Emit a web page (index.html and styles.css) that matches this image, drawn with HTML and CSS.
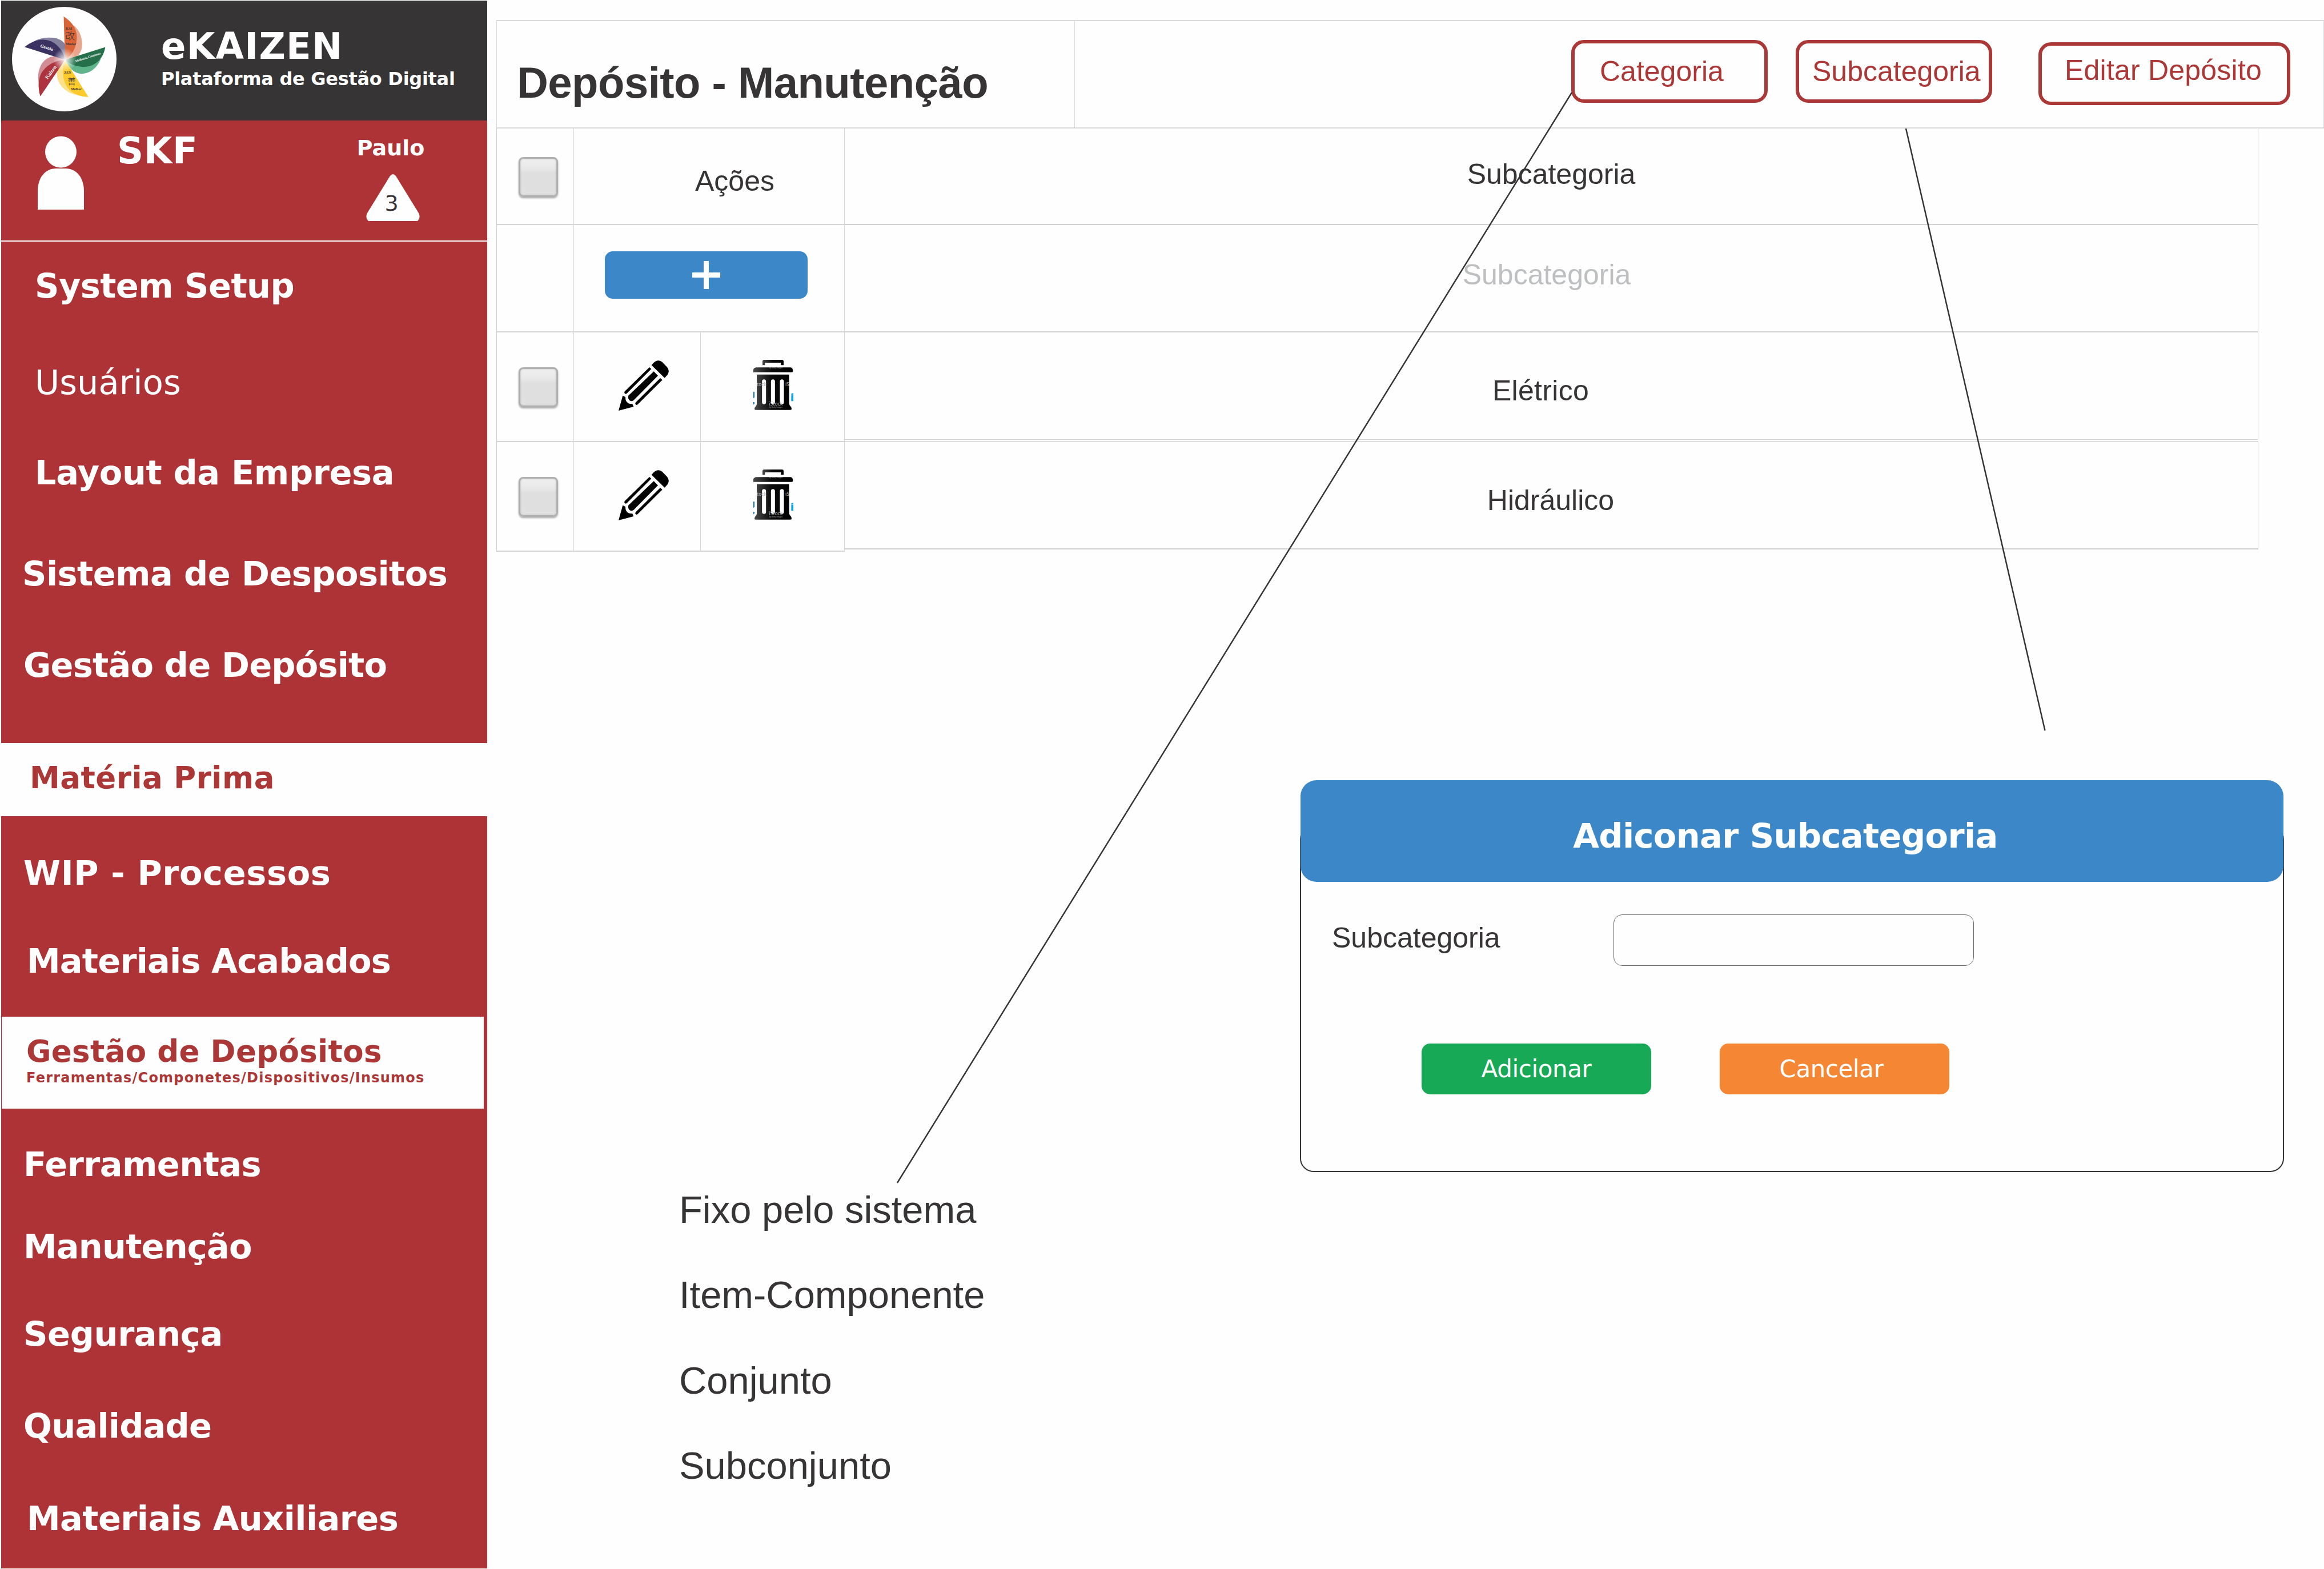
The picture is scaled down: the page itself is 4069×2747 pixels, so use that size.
FILE: index.html
```html
<!DOCTYPE html>
<html lang="pt-BR">
<head>
<meta charset="utf-8">
<title>eKAIZEN - Depósito</title>
<link rel="stylesheet" href="styles.css">
</head>
<body>
<aside class="sidebar">
  <div class="brand">
    <svg class="logo" viewBox="63 36 550 550">
      <defs>
        <radialGradient id="hub" gradientUnits="userSpaceOnUse" cx="341" cy="315" r="62">
          <stop offset="0" stop-color="#fff" stop-opacity=".95"/>
          <stop offset="1" stop-color="#fff" stop-opacity="0"/>
        </radialGradient>
      </defs>
      <circle cx="338" cy="311" r="275" fill="#fefefe"/>
      <path d="M385 132C425 160 440 220 428 262C418 295 385 312 342 315Z" fill="#e9a68c"/>
      <path d="M335 86C385 118 408 160 404 206C400 258 375 295 342 315Z" fill="#d96437"/>
      <path d="M342 315L530 310C510 360 470 388 425 388C390 386 365 360 342 315Z" fill="#5fb48b"/>
      <path d="M554 248C545 300 510 352 436 352C395 350 365 335 342 315Z" fill="#25704a"/>
      <path d="M342 315L300 372C292 425 330 490 410 500Z" fill="#fde08a"/>
      <path d="M342 315L465 510C400 508 350 480 334 410C328 370 332 340 342 315Z" fill="#fdca2b"/>
      <path d="M342 315C310 285 250 290 220 335C200 370 198 400 203 435Z" fill="#d18d93"/>
      <path d="M342 315C285 318 225 350 208 410C198 445 205 480 212 507Z" fill="#ad333f"/>
      <path d="M185 213C240 190 320 190 342 235L342 315Z" fill="#86809f"/>
      <path d="M129 247C180 208 225 200 270 218C310 238 335 275 342 315Z" fill="#3b3262"/>
      <circle cx="341" cy="315" r="62" fill="url(#hub)"/>
      <g class="logo-text">
        <text x="346" y="156" font-size="18">KAI</text>
        <text class="kanji" x="344" y="208" font-size="50">改</text>
        <text x="346" y="238" font-size="18">Mudar</text>
        <text x="337" y="389" font-size="18">ZEN</text>
        <text class="kanji" x="354" y="446" font-size="46">善</text>
        <text x="373" y="474" font-size="18">Melhor</text>
        <text class="light" transform="translate(398 328) rotate(-18)" font-size="17">Melhoria Contínua</text>
        <text class="light" transform="translate(210 248) rotate(17)" font-size="24">Gestão</text>
        <text class="light" transform="translate(250 418) rotate(-53)" font-size="27">Kaizen</text>
      </g>
    </svg>
    <div class="brand-text">
      <div class="brand-name">eKAIZEN</div>
      <div class="brand-sub">Plataforma de Gestão Digital</div>
    </div>
  </div>
  <div class="account">
    <svg class="person" viewBox="0 0 81 129">
      <circle cx="40.500" cy="28" r="27.500"/>
      <path d="M0 129V97C0 72 14 57 32 57H49C67 57 81 72 81 97V129Z"/>
    </svg>
    <div class="company">SKF</div>
    <div class="user">
      <div class="user-name">Paulo</div>
      <div class="alert">
        <svg class="alert-shape" viewBox="0 0 94 82"><path d="M42 3Q47 -3 52 3L92 68Q96 76 90 82H4Q-2 76 2 68Z"/></svg>
        <span class="alert-count">3</span>
      </div>
    </div>
  </div>
  <nav class="group group-setup">
    <a class="item in-3">System Setup</a>
    <a class="item in-3 regular">Usuários</a>
    <a class="item in-3 relaxed">Layout da Empresa</a>
    <a class="item in-0">Sistema de Despositos</a>
    <a class="item in-1 tight">Gestão de Depósito</a>
  </nav>
  <a class="section section-raw">Matéria Prima</a>
  <nav class="group group-stock">
    <a class="item in-1 loose">WIP - Processos</a>
    <a class="item in-2 tight">Materiais Acabados</a>
  </nav>
  <a class="section section-depots">Gestão de Depósitos
    <small class="section-note">Ferramentas/Componetes/Dispositivos/Insumos</small>
  </a>
  <nav class="group group-areas">
    <a class="item in-1">Ferramentas</a>
    <a class="item in-1 tight">Manutenção</a>
    <a class="item in-1 relaxed">Segurança</a>
    <a class="item in-1 tight">Qualidade</a>
    <a class="item in-2">Materiais Auxiliares</a>
  </nav>
</aside>
<main class="main">
  <header class="topbar">
    <h1 class="title">Depósito - Manutenção</h1>
    <button class="outline-btn btn-category">Categoria</button>
    <button class="outline-btn btn-subcategory">Subcategoria</button>
    <button class="outline-btn btn-edit">Editar Depósito</button>
  </header>
  <section class="table">
    <div class="actions">
      <div class="cell check-cell"><i class="checkbox"></i></div>
      <div class="cell wide actions-head">Ações</div>
      <div class="cell"></div>
      <div class="cell wide add-cell"><button class="add-btn"><svg class="plus" viewBox="0 0 49 49"><path d="M20 0h9v20h20v9h-20v20h-9v-20h-20v-9h20z"/></svg></button></div>
      <div class="cell check-cell low"><i class="checkbox"></i></div>
      <div class="cell pencil-cell"><svg class="icon" viewBox="39 48 264 264"><use href="#pencil"/></svg></div>
      <div class="cell trash-cell"><svg class="trash" viewBox="747 44 210 264"><use href="#trash"/></svg></div>
      <div class="cell check-cell low"><i class="checkbox"></i></div>
      <div class="cell pencil-cell"><svg class="icon" viewBox="39 48 264 264"><use href="#pencil"/></svg></div>
      <div class="cell trash-cell"><svg class="trash" viewBox="747 44 210 264"><use href="#trash"/></svg></div>
    </div>
    <div class="names">
      <div class="name name-head">Subcategoria</div>
      <div class="name name-new">Subcategoria</div>
      <div class="name name-electric">Elétrico</div>
      <div class="name name-hydraulic">Hidráulico</div>
    </div>
  </section>
  <section class="workspace">
    <div class="notes">
      <p>Fixo pelo sistema</p>
      <p>Item-Componente</p>
      <p>Conjunto</p>
      <p>Subconjunto</p>
    </div>
    <div class="dialog">
      <h2 class="dialog-title">Adiconar Subcategoria</h2>
      <div class="dialog-body">
        <div class="field"><label class="field-label" for="sub">Subcategoria</label><input class="field-input" id="sub"></div>
        <div class="dialog-actions">
          <button class="btn btn-add">Adicionar</button>
          <button class="btn btn-cancel">Cancelar</button>
        </div>
      </div>
    </div>
  </section>
</main>
<svg class="connectors" viewBox="0 0 4069 2747">
  <path d="M2752 162L1571 2071M3337 225L3580.500 1279"/>
</svg>
<svg class="defs" width="0" height="0">
  <defs>
    <linearGradient id="metal"><stop offset="0" stop-color="#484848"/><stop offset=".45" stop-color="#0b0b0b"/><stop offset="1" stop-color="#000"/></linearGradient>
    <g id="pencil">
      <path d="M212 73L223 61Q244 39 268 56L294 83Q310 103 296 124L281 140Z"/>
      <path d="M201 84L211 93L82 222Q75 227 70 220Q68 214 72 210Z"/>
      <path d="M224 106L246 128L120 256Q108 266 97 258Q85 245 92 232Z"/>
      <path d="M258 141L269 151L139 280Q131 285 127 277Q126 272 130 268Z"/>
      <path d="M61 233L75 240Q74 270 99 276L112 277L118 291L39 312Z"/>
    </g>
    <g id="trash">
      <path d="M795 72V53Q795 44 804 44H897Q906 44 906 53V72H892V59H808V72Z" fill="url(#metal)"/>
      <path d="M747 109V95Q752 84 763 84H941Q951 84 955 97V103Q955 109 949 109Z" fill="url(#metal)"/>
      <path d="M765 121H935V276Q937 284 944 290Q948 295 948 301Q948 307 942 307H759Q753 307 753 301Q753 294 760 288Q765 282 765 276Z" fill="url(#metal)"/>
      <path d="M803 157V267M850 157V267M897 157V267" stroke="#fefefe" stroke-width="21" stroke-linecap="round"/>
      <path d="M747 213h6v29l-6 3zM747 265q8 0 6 9l-6 5z" fill="#0a6fd8"/>
      <path d="M946 222l11-4v8l-11 3zM946 231l11-3v33h-11z" fill="#0ba5f2"/>
      <g class="stamp"><text x="766" y="182" font-size="25">tock</text><text x="915" y="182" font-size="25">iS</text><text x="829" y="284" font-size="26">iStock</text><text x="831" y="295" font-size="9">by Getty Images</text><text x="831" y="90" font-size="9">by Getty Images</text></g>
    </g>
  </defs>
</svg>
</body>
</html>
```
FILE: styles.css
```css
* { box-sizing: border-box; }
body {
  margin: 0;
  width: 4069px;
  height: 2747px;
  display: flex;
  position: relative;
  overflow: hidden;
  background: #fefefe;
  color: #373435;
  font-family: "Liberation Sans", Arial, sans-serif;
}
h1, h2, p { margin: 0; }
button { font: inherit; border: 0; padding: 0; margin: 0; text-align: left; }

/* Sidebar */
.sidebar {
  width: 851px;
  height: 2746px;
  margin-left: 2px;
  flex: none;
  background: #ad3336;
  color: #fefefe;
  border-top: 2px solid #c5c6c6;
  font-family: "DejaVu Sans", Verdana, sans-serif;
  font-weight: bold;
  line-height: 1;
}
.brand { display: flex; height: 209px; background: #373435; }
.logo { width: 183px; height: 183px; margin: 10px 0 0 19px; flex: none; }
.logo-text { font-family: "Liberation Serif", serif; font-weight: bold; fill: #373435; }
.logo-text .light { fill: #fefefe; }
.logo-text .kanji { font-family: "Noto Sans CJK JP", sans-serif; font-weight: 300; }
.brand-text { padding: 47px 0 0 78px; white-space: nowrap; }
.brand-name { font-size: 64px; height: 73px; letter-spacing: 1.260px; }
.brand-sub { font-size: 32px; letter-spacing: -0.290px; }
.account { display: flex; height: 212px; border-bottom: 2px solid #fefefe; }
.person { width: 81px; height: 129px; margin: 27px 0 0 64px; flex: none; fill: #fefefe; }
.company { width: 477px; flex: none; padding: 21px 0 0 58px; font-size: 64px; letter-spacing: 0.660px; }
.user { width: 120px; flex: none; padding-top: 29px; display: flex; flex-direction: column; align-items: center; }
.user-name { height: 65px; font-size: 38px; }
.alert { width: 94px; height: 82px; position: relative; margin-left: 7px; }
.alert-shape { display: block; width: 94px; height: 82px; fill: #fefefe; }
.alert-count { position: absolute; left: 33px; top: 32px; font-size: 38px; font-weight: normal; color: #373435; }
.group { display: grid; font-size: 59px; white-space: nowrap; letter-spacing: -0.600px; }
.group-setup { height: 878px; padding-top: 48px; grid-template-rows: 169px 158px 177px 160px 166px; }
.group-stock { height: 351px; padding-top: 70px; grid-template-rows: 154px 127px; }
.group-areas { padding-top: 68px; grid-template-rows: 144px 153px 161px 162px 100px; }
.in-0 { padding-left: 37px; }
.in-1 { padding-left: 39px; }
.in-2 { padding-left: 45px; }
.in-3 { padding-left: 59px; }
.tight { letter-spacing: -0.840px; }
.relaxed { letter-spacing: -0.400px; }
.loose { letter-spacing: 0.600px; }
.regular { font-weight: normal; letter-spacing: 0.100px; }
.section { display: block; background: #fefefe; color: #ab3836; font-size: 53px; white-space: nowrap; letter-spacing: 0.500px; }
.section-raw { height: 128px; padding: 34px 0 0 50px; }
.section-depots { height: 161px; margin: 0 6px 0 1px; padding: 34px 0 0 43px; letter-spacing: 0.330px; }
.section-note { display: block; margin-top: 8px; font-size: 24px; letter-spacing: 1.240px; }

/* Top bar */
.main { flex: none; width: 3216px; padding: 35px 0 0 16px; line-height: 1; font-size: 50px; white-space: nowrap; }
.topbar {
  display: flex;
  align-items: flex-start;
  height: 190px;
  border: solid #d9dadb;
  border-width: 2px 1px;
}
.title { width: 1012px; flex: none; height: 186px; padding: 70px 0 0 35px; border-right: 1px solid #d9dadb; font-size: 76px; letter-spacing: -0.520px; }
.outline-btn { height: 110px; flex: none; border: 6px solid #ab3836; border-radius: 22px; background: #fefefe; color: #ab3836; line-height: 1; display: block; }
.btn-category { width: 344px; margin: 33px 0 0 869px; padding: 0 0 0 44px; }
.btn-subcategory { width: 344px; margin: 33px 0 0 49px; padding: 0 0 0 23px; }
.btn-edit { width: 441px; margin: 37px 0 0 81px; padding: 0 0 12px 40px; letter-spacing: 0.210px; }

/* Table */
.table { display: flex; align-items: flex-start; }
.actions {
  display: grid;
  grid-template-columns: 135px 222px 252px;
  grid-template-rows: 169px 188px 192px 192px;
  border-left: 1px solid #cfd0d1;
}
.cell { border: solid #d4d5d6; border-width: 0 1px 2px 0; }
.wide { grid-column: span 2; }
.check-cell { padding: 50px 0 0 38px; }
.check-cell.low { padding-top: 61px; }
.checkbox {
  display: block;
  width: 69px;
  height: 70px;
  border: 3px solid #b0b0b0;
  border-radius: 8px;
  background: linear-gradient(#efefef, #e9e9e9 25%, #dfdfdf 40%, #e0e0e0);
  box-shadow: 0 2px 3px #aaa, inset 0 0 3px #bbb;
}
.actions-head { padding: 67px 0 0 212px; }
.add-cell { padding: 46px 0 0 54px; }
.add-btn { display: flex; align-items: center; justify-content: center; width: 355px; height: 83px; border-radius: 14px; background: #3c87c7; }
.plus { width: 49px; height: 49px; fill: #fefefe; }
.pencil-cell { padding: 49px 0 0 78px; }
.icon { display: block; width: 88px; height: 88px; }
.trash-cell { padding: 48px 0 0 92px; }
.trash { display: block; width: 70px; height: 88px; }
.stamp { fill: #b5b5b5; font-family: "Noto Sans", sans-serif; }
.names { width: 2475px; text-align: center; }
.name { border: solid #d0d1d2; border-width: 0 1px 2px 0; }
.name-head { height: 169px; padding-top: 55px; }
.name-new { height: 188px; padding: 62px 16px 0 0; color: #bdbfc1; }
.name-electric { height: 188px; padding: 77px 37px 0 0; border-bottom-width: 1px; letter-spacing: 0.300px; }
.name-hydraulic { height: 190px; margin-top: 2px; padding: 77px 2px 0 0; border-top: 2px solid #e0e0e0; }

/* Workspace below the table */
.workspace { display: flex; align-items: flex-start; }
.notes { width: 1408px; flex: none; padding: 1119px 0 0 320px; display: grid; gap: 82.400px; font-size: 66.900px; }
.dialog { width: 1721px; flex: none; margin-top: 400px; }
.dialog-title {
  position: relative;
  height: 178px;
  padding: 68px 23px 0 0;
  border-radius: 28px;
  background: #3c87c7;
  color: #fefefe;
  text-align: center;
  font: bold 59px/1 "DejaVu Sans", Verdana, sans-serif;
  letter-spacing: -0.630px;
}
.dialog-body { height: 607px; margin: -99px -1px 0; padding: 154px 0 0 54px; border: 2.500px solid #373435; border-radius: 24px; }
.field { display: flex; }
.field-label { width: 493px; padding-top: 16px; }
.field-input { width: 631px; height: 90px; border: 1.500px solid #6b6b6b; border-radius: 15px; background: #fefefe; }
.dialog-actions { display: flex; gap: 120px; margin: 136px 0 0 157px; }
.btn { width: 402px; height: 89px; border-radius: 15px; color: #fefefe; text-align: center; font: 42px/1 "DejaVu Sans", Verdana, sans-serif; letter-spacing: -0.400px; }
.btn-add { background: #17a956; }
.btn-cancel { background: #f58634; padding-right: 11px; }

/* Callout lines over the page */
.connectors { position: absolute; left: 0; top: 0; width: 4069px; height: 2747px; fill: none; stroke: #373435; stroke-width: 2.500; pointer-events: none; }
.defs { position: absolute; }
```
